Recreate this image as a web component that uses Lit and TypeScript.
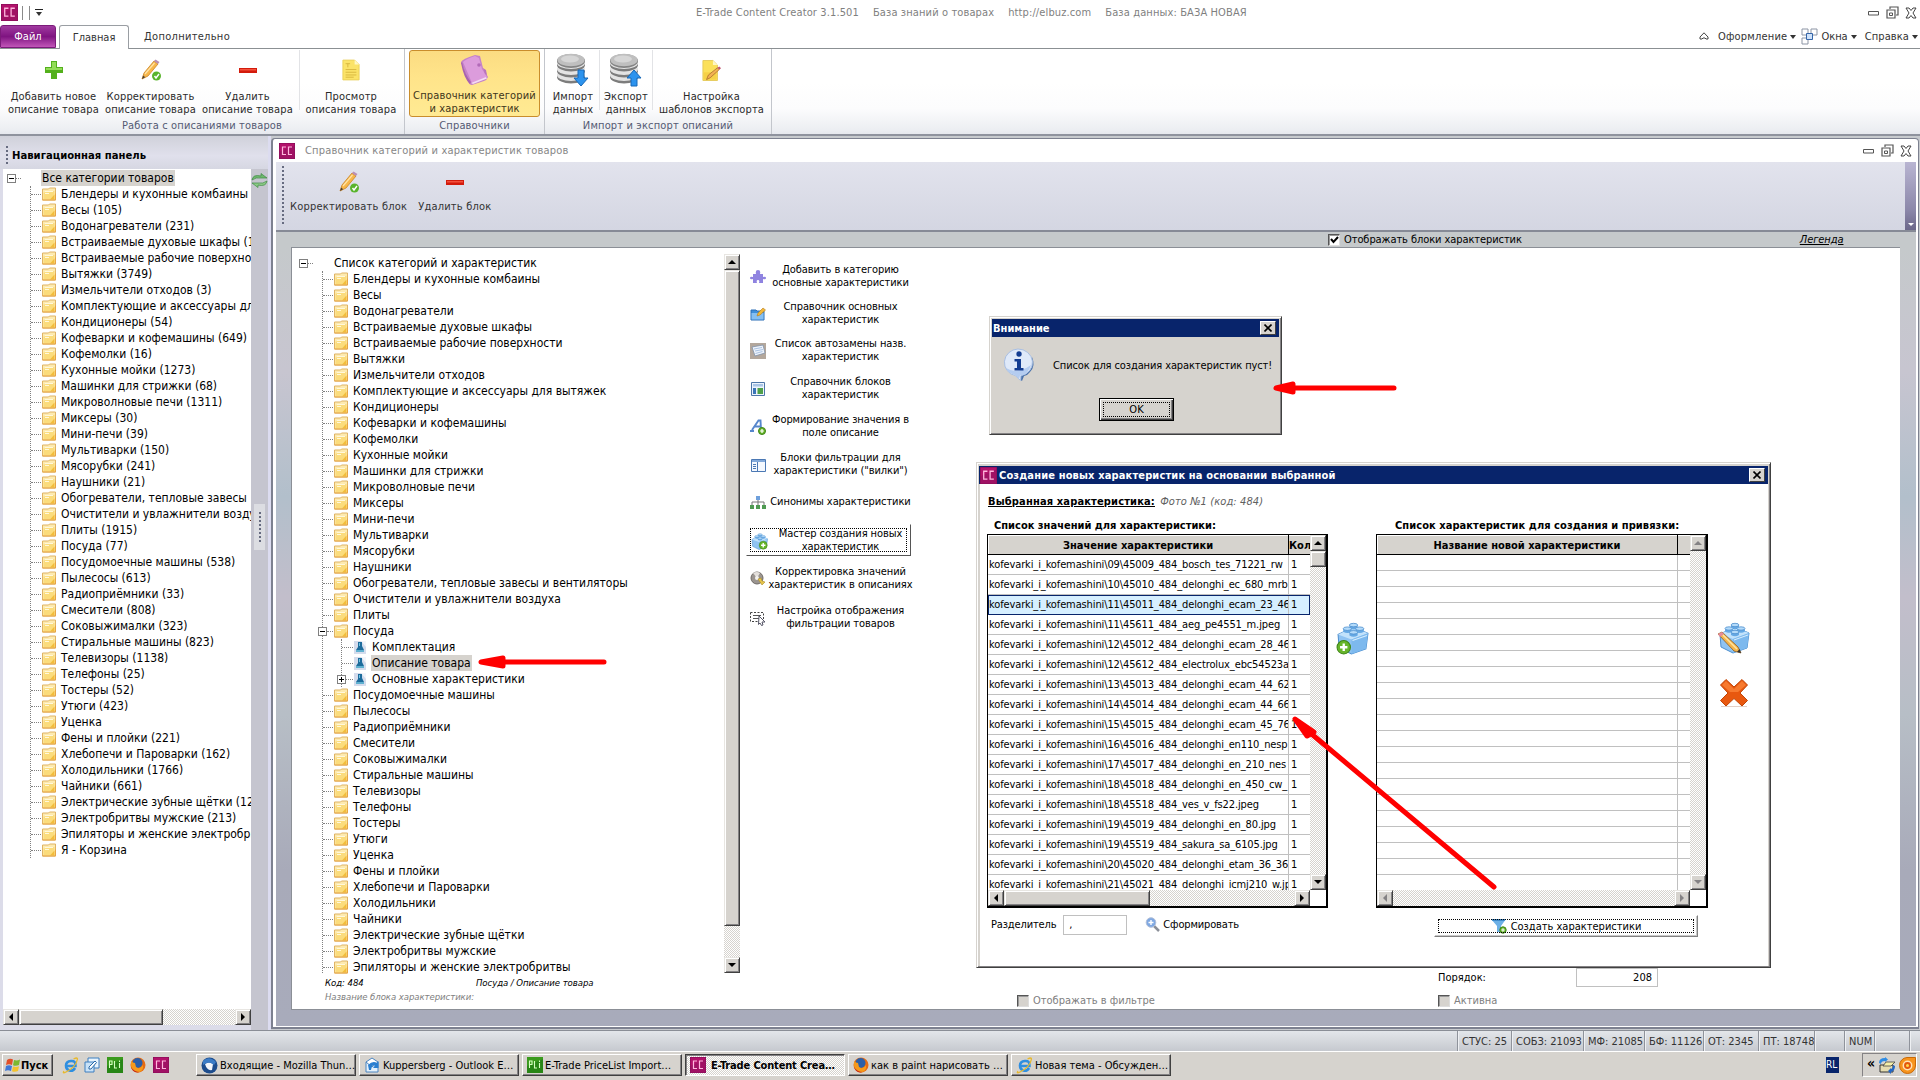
import { LitElement, html, svg, css } from 'lit';
import { customElement, property } from 'lit/decorators.js';
import { classMap } from 'lit/directives/class-map.js';

interface TreeNode {
  label: string;
  open?: boolean;
  children?: TreeLeaf[];
}

interface TreeLeaf {
  label: string;
  selected?: boolean;
  expandable?: boolean;
}

interface Action {
  icon: unknown;
  lines: string[];
  top: number;
  focused?: boolean;
}

const NAV_ITEMS = [
  'Блендеры и кухонные комбаины', 'Весы (105)', 'Водонагреватели (231)',
  'Встраиваемые духовые шкафы (12)', 'Встраиваемые рабочие поверхности', 'Вытяжки (3749)',
  'Измельчители отходов (3)', 'Комплектующие и аксессуары для вытяжек', 'Кондиционеры (54)',
  'Кофеварки и кофемашины (649)', 'Кофемолки (16)', 'Кухонные мойки (1273)',
  'Машинки для стрижки (68)', 'Микроволновые печи (1311)', 'Миксеры (30)', 'Мини-печи (39)',
  'Мультиварки (150)', 'Мясорубки (241)', 'Наушники (21)', 'Обогреватели, тепловые завесы',
  'Очистители и увлажнители воздуха', 'Плиты (1915)', 'Посуда (77)',
  'Посудомоечные машины (538)', 'Пылесосы (613)', 'Радиоприёмники (33)', 'Смесители (808)',
  'Соковыжималки (323)', 'Стиральные машины (823)', 'Телевизоры (1138)', 'Телефоны (25)',
  'Тостеры (52)', 'Утюги (423)', 'Уценка', 'Фены и плойки (221)',
  'Хлебопечи и Пароварки (162)', 'Холодильники (1766)', 'Чайники (661)',
  'Электрические зубные щётки (12)', 'Электробритвы мужские (213)',
  'Эпиляторы и женские электробритвы', 'Я - Корзина',
];

const CATEGORIES: TreeNode[] = [
  'Блендеры и кухонные комбаины', 'Весы', 'Водонагреватели', 'Встраиваемые духовые шкафы',
  'Встраиваемые рабочие поверхности', 'Вытяжки', 'Измельчители отходов',
  'Комплектующие и аксессуары для вытяжек', 'Кондиционеры', 'Кофеварки и кофемашины',
  'Кофемолки', 'Кухонные мойки', 'Машинки для стрижки', 'Микроволновые печи', 'Миксеры',
  'Мини-печи', 'Мультиварки', 'Мясорубки', 'Наушники',
  'Обогреватели, тепловые завесы и вентиляторы', 'Очистители и увлажнители воздуха', 'Плиты',
  'Посуда', 'Посудомоечные машины', 'Пылесосы', 'Радиоприёмники', 'Смесители',
  'Соковыжималки', 'Стиральные машины', 'Телевизоры', 'Телефоны', 'Тостеры', 'Утюги',
  'Уценка', 'Фены и плойки', 'Хлебопечи и Пароварки', 'Холодильники', 'Чайники',
  'Электрические зубные щётки', 'Электробритвы мужские', 'Эпиляторы и женские электробритвы',
].map((label) =>
  label === 'Посуда'
    ? {
        label,
        open: true,
        children: [
          { label: 'Комплектация' },
          { label: 'Описание товара', selected: true },
          { label: 'Основные характеристики', expandable: true },
        ],
      }
    : { label }
);

const VALUES = [
  '09\\45009_484_bosch_tes_71221_rw', '10\\45010_484_delonghi_ec_680_mrb',
  '11\\45011_484_delonghi_ecam_23_46', '11\\45611_484_aeg_pe4551_m.jpeg',
  '12\\45012_484_delonghi_ecam_28_46', '12\\45612_484_electrolux_ebc54523a',
  '13\\45013_484_delonghi_ecam_44_62', '14\\45014_484_delonghi_ecam_44_66',
  '15\\45015_484_delonghi_ecam_45_76', '16\\45016_484_delonghi_en110_nesp',
  '17\\45017_484_delonghi_en_210_nes', '18\\45018_484_delonghi_en_450_cw_',
  '18\\45518_484_ves_v_fs22.jpeg', '19\\45019_484_delonghi_en_80.jpg',
  '19\\45519_484_sakura_sa_6105.jpg', '20\\45020_484_delonghi_etam_36_36',
  '21\\45021_484_delonghi_icmj210_w.jpg',
];

const STATUS: [string, number][] = [
  ['СТУС: 25', 54], ['СОБЗ: 21093', 72], ['МФ: 21085', 61], ['БФ: 11126', 59],
  ['ОТ: 2345', 55], ['ПТ: 18748', 56], ['', 30], ['NUM', 30], ['', 35], ['', 11],
];

/* Icons */
const pic = (w: number, h: number, box: string, body: unknown) =>
  html`<svg width=${w} height=${h} viewBox=${box}>${body}</svg>`;

const folder = pic(14, 14, '0 0 14 14', svg`
  <path d="M.5 2h6l1-1h6v12H.5z" fill="#fdeab0" stroke="#dfb364"/>
  <path d="M1.500 5.500 12.500 4v8.500h-11z" fill="#fbdc7c"/>
  <path d="M3 4.500h8M3 6.500h4" stroke="#fff8dc"/><path d="m8 12.500 4.500-5v5z" fill="#f2bd3c"/>
  <path d="M.5 13h13V6.500" fill="none" stroke="#e7a443"/>`);

const leaf = pic(12, 13, '0 0 12 13', svg`
  <path d="M0 0h12v13H0z" fill="#d5dcec"/><path d="M7 0h5v6z" fill="#f3f5fa"/>
  <path d="M4 1h4v4l2 4H2l2-3z" fill="#1d6c9c"/><path d="M2 9h8v2H2z" fill="#5fb0d0"/>
  <path d="M5 2h1v3H5z" fill="#6fc2e2"/>`);

const ccBadge = (size: number) => pic(size, size, '0 0 16 16', svg`
  <path d="M0 0h16v16H0z" fill="#b3126b"/><path d="M0 0h16v16H0z" fill="none" stroke="#7c0b52"/>
  <path d="M0 16V9l16-7v14z" fill="#8d0f5d" opacity=".5"/>
  <path d="M7 4H3.500v7.500H7M13 4H9.500v7.500H13" fill="none" stroke="#ffb7de" stroke-width="1.200"/>`);

const pliBadge = pic(16, 16, '0 0 16 16', svg`
  <path d="M0 0h16v16H0z" fill="#3a9a1d"/><path d="M0 16V9l16-7v14z" fill="#1d7a12" opacity=".6"/>
  <path d="M2.500 11V4H5v3.500H2.500M7.500 4v7H10M12.500 6v5M12.500 3.500v1.500" fill="none" stroke="#d5ffc0" stroke-width="1.100"/>`);

const plus = pic(20, 20, '0 0 20 20', svg`
  <path d="M7 1h6v6h6v6h-6v6H7v-6H1V7h6z" fill="#53b01c"/><path d="M8 2h4v6h6v2H2V8h6z" fill="#93dc58"/>`);

const minus = pic(20, 20, '0 0 20 20', svg`
  <path d="M1 8h18v5H1z" fill="#d31b0c"/><path d="M2 9h16v1.500H2z" fill="#f4513c"/>`);

const pencilCheck = pic(22, 22, '0 0 22 22', svg`
  <path d="M2 20 4 14 14 2l4 3L8 17z" fill="#f7b64a" stroke="#c98324" stroke-width=".8"/>
  <path d="m14 2 1.500-1.500L19.500 3 18 5z" fill="#b98fb5"/><path d="m2 20 1.200-3.500 2 1.700z" fill="#4a4038"/>
  <path d="m5 15 9.500-11" stroke="#ffe4a8" stroke-width="1.200"/>
  <circle cx="16.500" cy="17" r="4.500" fill="#59b42c"/><path d="m14.500 17 1.500 2 3-4" fill="none" stroke="#fff" stroke-width="1.400"/>`);

const note = pic(18, 22, '0 0 20 24', svg`
  <path d="M1 1h13l5 5v17H1z" fill="#fbe368" stroke="#ead05a"/><path d="M14 1v5h5z" fill="#fff7c4"/>
  <path d="M4 5h5M6.500 5v4M4 11.500h12M4 14.500h12M4 17.500h12M4 20h9" stroke="#d6b43c"/>`);

const noteEdit = pic(20, 23, '0 0 22 24', svg`
  <path d="M1 1h11l5 5v17H1z" fill="#fbe05a" stroke="#e5c95a"/><path d="M12 1v5h5z" fill="#fff7c4"/>
  <path d="M2 14h14v8H2z" fill="#f3c73a" opacity=".6"/>
  <path d="m5 22 2-5 10-8 2 2L9 20z" fill="#f2b052" stroke="#a4682a" stroke-width=".8"/><path d="m17 9 2-1.500 2 2-2 1.500z" fill="#c0546e"/>`);

const book = pic(32, 32, '0 0 32 32', svg`
  <path d="M2 8Q3 5 16 1l5 1 3 12 5 9q-1 3-4 4L13 31q-3 0-4-4z" fill="#c583c8"/>
  <path d="M4 8Q7 5 16 2l4 2 3 11 5 8-15 6z" fill="#dc9cdc"/><path d="m12 29 15-6 1 1.500L14 30z" fill="#f4dcf4"/>
  <path d="M3 8q3 13 9 20l-1 2Q5 25 2 9z" fill="#a863b0"/><circle cx="20" cy="11" r="1.800" fill="#b26ab8"/>
  <path d="m24 14 3 2 1 5-2-1z" fill="#b873bd"/>`);

const database = (up: boolean) => pic(34, 34, '0 0 34 34', svg`
  ${[24, 18, 12].map((y) => svg`<ellipse cx="15" cy=${y} rx="14" ry="6.500" fill="#7c7c7c"/>
    <ellipse cx="15" cy=${y - 2} rx="14" ry="6" fill="#e3e3e3"/>`)}
  <ellipse cx="15" cy="8" rx="14" ry="7" fill="#858585"/><ellipse cx="15" cy="7" rx="13.500" ry="6.200" fill="#bfbfbf"/>
  <ellipse cx="14" cy="6" rx="9" ry="3.500" fill="#d6d6d6"/>
  <path d=${up ? 'M25 17l7 8h-4v8h-6v-8h-4z' : 'M22 17h6v8h4l-7 8-7-8h4z'} fill="#2c93ee" stroke="#1668b8"/>`);

const refresh = pic(17, 15, '0 0 17 15', svg`
  <path d="M1 7Q2 1 10 3V.5L16 5h-6Q5 4 1 7z" fill="#6db86d" stroke="#3d8a43" stroke-width=".7"/>
  <path d="M16 8q-1 6-9 4v2.500L1 10h6q5 1 9-2z" fill="#8ccb86" stroke="#3d8a43" stroke-width=".7"/>`);

const brick = (overlay: unknown, size: number) => pic(size, size, '0 0 32 32', svg`
  <path d="M2 12 17 5l14 6-2 15-14 5L3 25z" fill="#8fc3f2" stroke="#4e8fce"/>
  <path d="m2 12 13 5 16-6L17 5z" fill="#c2e2fb"/><path d="m15 17 16-6-2 15-14 5z" fill="#7db9ee"/>
  <path d="m16 18 14-5" stroke="#d8eefe"/>
  ${[[17, 3], [11, 6.5], [23, 6.5], [17, 10]].map(([x, y]) => svg`
    <path d=${`M${x - 4} ${y}v3q4 2.500 8 0v-3z`} fill="#65a8e4"/><ellipse cx=${x} cy=${y} rx="4" ry="1.700" fill="#b4dbfa" stroke="#4e8fce" stroke-width=".8"/>`)}
  ${overlay}`);

const plusBall = (x: number, y: number, r: number) => svg`
  <circle cx=${x} cy=${y} r=${r} fill="#67b52a" stroke="#3e8417"/>
  <path d=${`M${x - r * 0.55} ${y}h${r * 1.1}M${x} ${y - r * 0.55}v${r * 1.1}`} stroke="#fff" stroke-width=${r * 0.35}/>`;

const brickAdd = brick(plusBall(7.5, 24.5, 6.5), 33);
const brickEdit = brick(svg`<path d="m0 12 4-2 16 15 3 6-7-2z" fill="#f5b64c" stroke="#8a5a20" stroke-width=".8"/>
  <path d="m0 12 4-2 2 2-4 3z" fill="#e58b9a"/><path d="m19 30 4 1-1.500-4z" fill="#333"/><path d="m5 13 14 14" stroke="#ffe3a0" stroke-width="1.500"/>`, 32);
const brickSmall = brick(plusBall(23, 23, 7.5), 17);

const cross = pic(30, 30, '0 0 30 30', svg`
  <path d="M2 28.500h26" stroke="#e2cfc6"/>
  <path d="M7 1.500 15 9l8-7.500 5.500 5.500L21 15l7.500 7.500L23 28l-8-7.500L7 28l-5.500-5.500L9 15 1.500 7z" fill="#e8580f" stroke="#c24405" stroke-linejoin="round"/>
  <path d="m7 3 8 8 8-8 4 4-8 7H11L3 7z" fill="#f77a2f"/>`);

const puzzle = pic(16, 16, '0 0 16 16', svg`
  <path d="M3 5h3Q5 1 8 1t2 4h3v3q3-1 3 1t-3 1v4H9q1-3-1-3t-1 3H3v-4q-3 1-3-1t3-1z" fill="#8f83e0"/>`);
const folderEdit = pic(16, 14, '0 0 16 14', svg`
  <path d="M1 3h5l1 1h7v9H1z" fill="#3f8fdb" stroke="#2c6fb6"/><path d="M1.500 6h12v6.500h-12z" fill="#86bff2"/>
  <path d="m7 9 1-3 5-5 2.500 2-5.500 5z" fill="#f0b73a" stroke="#b77a18" stroke-width=".6"/>`);
const card = pic(16, 16, '0 0 16 16', svg`
  <path d="M0 0h16v16H0z" fill="#b3a79c"/><path d="m2 4 11-2 2 8-10 3z" fill="#eef3fb" stroke="#7f90a8" stroke-width=".8"/>
  <path d="m4 6 8-1.500M5 8l8-1.500M5.500 10.500l7-2" stroke="#a9c2e2"/>`);
const blocks = pic(14, 14, '0 0 14 14', svg`
  <path d="M.5.5h13v13H.5z" fill="#eef4fc" stroke="#4d76a8"/><path d="M2 2h10v2.500H2z" fill="#a9c5e6"/>
  <path d="M2 6h3v6H2z" fill="#3b76b8"/><path d="M6.500 6H12v6H6.500z" fill="#4fa04a"/>`);
const letterAdd = pic(16, 16, '0 0 16 16', svg`
  <path d="M2 11 8.500 1.500h2L11 11M5 7.500h6M0 12h4M9 12h3" fill="none" stroke="#5686cc" stroke-width="1.900"/>${plusBall(12, 12, 3.5)}`);
const columns = pic(15, 13, '0 0 15 13', svg`
  <path d="M.5.5h14v12H.5z" fill="#f4f8fe" stroke="#4b78b4"/><path d="M1 1h13v2H1z" fill="#82a9da"/>
  <path d="M6.500 3v10M2 5.500h3M2 7.500h3M2 9.500h3" stroke="#4b78b4"/>`);
const orgChart = pic(16, 13, '0 0 16 13', svg`
  <path d="M8 3v6M2 9V6h12v3" fill="none" stroke="#777"/><path d="M6 0h4v4H6z" fill="#6fa0dc"/>
  <path d="M0 9h4v4H0zM6 9h4v4H6zM12 9h4v4h-4z" fill="#4f9a52"/>`);
const discEdit = pic(16, 16, '0 0 16 16', svg`
  <circle cx="7" cy="7" r="6" fill="#9b9590" stroke="#6f6a66"/><path d="M7 7 3 2q4-2 7 0z" fill="#e4e0dc"/>
  <circle cx="7" cy="7" r="2" fill="#f4f2f0"/><path d="m8 8 3-1 1 3 3 1-3 3-2-3z" fill="#e8c64a" stroke="#a98c2a" stroke-width=".6"/>`);
const marquee = pic(16, 16, '0 0 16 16', svg`
  <path d="M.5 2.500h13v9H.5z" fill="none" stroke="#444" stroke-dasharray="2 1.500"/><path d="M3 5.500h8M3 8.500h6" stroke="#555"/>
  <path d="m9 6 6 6h-3l1 3-1.500.5L10 13l-1.500 1.500z" fill="#fff" stroke="#556"/>`);
const funnel = pic(16, 16, '0 0 16 16', svg`
  <path d="M0 1h15L10 8v6H6V8z" fill="#6cb0e6"/><path d="M0 1h15l-1.500 2h-12z" fill="#3f8bcb"/>${plusBall(12, 12, 3.2)}`);
const magnifier = pic(15, 15, '0 0 15 15', svg`
  <path d="m9 9 5 5" stroke="#8b8f98" stroke-width="2.500"/><circle cx="6" cy="5.500" r="4.800" fill="#7fa8e2" stroke="#b3c0d8"/>
  <path d="M3.500 5.500h5M6 3v5" stroke="#fff" stroke-width="1.400"/>`);
const info = pic(34, 34, '0 0 34 34', svg`
  <path d="M30 9q4 9-2 15-2 3-6 4l-2 5-6-5z" fill="#4a72ab"/>
  <path d="M16 1a14.500 13.500 0 0 1 3 26.700l-.5 4.800-5-4.800A14 13.500 0 0 1 16 1z" fill="#dfe9f9" stroke="#a9bfe2"/>
  <path d="M4 20q11 7 25-3-3 10-11 10.500L17 31l-4-4Q6 25 4 20z" fill="#b4ccf0"/>
  <circle cx="17" cy="6" r="2.700" fill="#143d92"/><path d="M12.500 11h6.500v9h2.500v2.500h-9V20H15v-6.500h-2.500z" fill="#143d92"/>`);

const tile = pic(12, 16, '0 0 12 14', svg`<path d="M.5 5.500h10v3.500H.5z" fill="#fff" stroke="#555"/>`);
const restore = pic(13, 13, '0 0 13 13', svg`
  <path d="M4 3V1h8v8h-2" fill="none" stroke="#555" stroke-width="1.200"/><path d="M1 4h8v8H1z" fill="#fff" stroke="#555" stroke-width="1.200"/><path d="M3.500 7h3v2.500h-3z" fill="none" stroke="#555"/>`);
const closeMark = pic(12, 12, '0 0 12 12', svg`
  <path d="M1 1h3l2 2.500L8 1h3L8 6l3 5H8L6 8.500 4 11H1l3-5z" fill="#fff" stroke="#444"/>`);
const windows = pic(17, 17, '0 0 17 17', svg`
  <path d="M1 1h6v6H1zM10 1h6v6h-6zM1 10h6v6H1z" fill="#fff" stroke="#8c95a5"/><path d="M5.500 5.500h6v6h-6z" fill="#cfe2fa" stroke="#3465a8"/>`);
const home = pic(10, 9, '0 0 10 9', svg`<path d="M5 .8 9 5v2H7L6 6H4L3 7H1V5z" fill="#fff" stroke="#444"/>`);

const ie = pic(17, 17, '0 0 17 17', svg`
  <path d="M13 11q-2 3.500-5.500 2.500T4 8.500 9 4t4.500 5H5" fill="none" stroke="#2f8fe0" stroke-width="2.600"/>
  <path d="M2 14Q0 17 4 15 14 10 15.500 2q0-2-4 0" fill="none" stroke="#e8b92c" stroke-width="1.300"/>`);
const desktop = pic(16, 16, '0 0 16 16', svg`
  <path d="M4 1h11v10H4z" fill="#e9f4fd" stroke="#3d7fc0"/><path d="M1 5h9v10H1z" fill="#c9e2f7" stroke="#3d7fc0"/><path d="m5 10 6-6 1.500 1.500L7 12H5z" fill="#fff" stroke="#2a6aa8"/>`);
const firefox = pic(16, 16, '0 0 16 16', svg`
  <circle cx="8" cy="8" r="7.500" fill="#e66b12"/><circle cx="7.500" cy="6" r="5" fill="#2b5fa8"/>
  <path d="M1 4q2 2 4 2l1 4q4 3 7-2 1 6-5 7.500Q0 15 1 4z" fill="#f59a1b"/><path d="M1 10q3 5 9 5-7 2-9-5z" fill="#c4271c"/>`);
const thunderbird = pic(17, 17, '0 0 17 17', svg`
  <circle cx="8.500" cy="8.500" r="8" fill="#1d4c8c"/><path d="M4 7q4-3 8 0l-1 6q-5 1-7-6z" fill="#f2f5fa"/><path d="M2 4Q8-2 15 5l-2 3Q8 3 2 8z" fill="#3c7cc6"/>`);
const outlook = pic(17, 17, '0 0 17 17', svg`
  <path d="M2 5h12v10H2z" fill="#e5f1fb" stroke="#4a84c0"/><path d="m2 5 6-4 6 4-6 5z" fill="#fff" stroke="#4a84c0"/>
  <path d="M4 8q5-5 9-2l1.500-2v7H9l2-2.500Q8 7 7 13H5z" fill="#2b7fd0"/>`);
const flag = pic(16, 16, '0 0 16 16', svg`
  <path d="M2 3q3-2 6-.5L7 8Q4 6.500 1 8z" fill="#e2502a"/><path d="M9 3q3 1 6-.5L14 8q-3 1.500-6 .3z" fill="#7cb82f"/>
  <path d="M1 9q3-1.500 6 0l-1 5q-3-1.500-6 0z" fill="#3f78d8"/><path d="M8 9.500q3 1 6-.3L13 14q-3 1.500-6 .3z" fill="#f4c22c"/>`);
const lan = pic(18, 17, '0 0 18 17', svg`
  <path d="M2 8h13v7H2z" fill="#e6ddb0" stroke="#333"/><path d="m5 9 3-4h9l-4 4z" fill="#f6f0a8" stroke="#444" stroke-width=".8"/>
  <path d="M1 6q0-5 6-5V0l3 2.500L7 5V4Q3 4 3 7z" fill="#2f8ce4"/><path d="M17 9q0 5-4 6v2l-3-3 3-3v1q2-1 2-4z" fill="#2467c4"/>`);
const agent = pic(17, 17, '0 0 17 17', svg`
  <path d="M8 .5h8.500V9A8 8 0 1 1 8 .5z" fill="#f7941d" stroke="#c96a08"/><circle cx="8.500" cy="8.500" r="4.200" fill="#e4560c" stroke="#ffe2b5" stroke-width="1.500"/><circle cx="8.500" cy="8.500" r="1.500" fill="#ffd84a"/>`);

const ACTIONS: Action[] = [
  { icon: puzzle, lines: ['Добавить в категорию', 'основные характеристики'], top: 262 },
  { icon: folderEdit, lines: ['Справочник основных', 'характеристик'], top: 299 },
  { icon: card, lines: ['Список автозамены назв.', 'характеристик'], top: 336 },
  { icon: blocks, lines: ['Справочник блоков', 'характеристик'], top: 374 },
  { icon: letterAdd, lines: ['Формирование значения в', 'поле описание'], top: 412 },
  { icon: columns, lines: ['Блоки фильтрации для', 'характеристики ("вилки")'], top: 450 },
  { icon: orgChart, lines: ['Синонимы характеристики'], top: 494 },
  { icon: brickSmall, lines: ['Мастер создания новых', 'характеристик'], top: 526, focused: true },
  { icon: discEdit, lines: ['Корректировка значений', 'характеристик в описаниях'], top: 564 },
  { icon: marquee, lines: ['Настройка отображения', 'фильтрации товаров'], top: 603 },
];

const TASKS = [
  { icon: thunderbird, label: 'Входящие - Mozilla Thun…' },
  { icon: outlook, label: 'Kuppersberg - Outlook E…' },
  { icon: pliBadge, label: 'E-Trade PriceList Import…' },
  { icon: ccBadge(16), label: 'E-Trade Content Crea…', active: true },
  { icon: firefox, label: 'как в paint нарисовать …' },
  { icon: ie, label: 'Новая тема - Обсужден…' },
];

@customElement('classic-scrollbar')
export class ClassicScrollbar extends LitElement {
  @property({ type: Boolean, reflect: true })
  vertical = false;

  @property({ type: Boolean })
  disabled = false;

  @property({ type: Number })
  thumb = 0;

  static styles = css`
    :host {
      display: flex;
      width: 100%;
      height: 16px;
      background: repeating-conic-gradient(#fff 0 25%, #d6d3ce 0 50%) 0 0 / 2px 2px;
    }

    :host([vertical]) {
      flex-direction: column;
      width: 16px;
      height: 100%;
    }

    .cap,
    .thumb {
      flex: none;
      box-sizing: border-box;
      width: 16px;
      height: 16px;
      background: #d6d3ce;
      border: 1px solid;
      border-color: #e8e6e2 #404040 #404040 #e8e6e2;
      box-shadow: inset 1px 1px #fff, inset -1px -1px #848284;
    }

    .cap svg {
      display: block;
      margin: 3px;
    }

    .gap {
      flex: 1;
    }
  `;

  private _cap(d: string) {
    return html`<div class="cap"><svg width="8" height="8" viewBox="0 0 8 8"><path d=${d} fill=${this.disabled ? '#848284' : '#000'} /></svg></div>`;
  }

  render() {
    const size = `${this.vertical ? 'height' : 'width'}: ${this.thumb}px`;
    return html`
      ${this._cap(this.vertical ? 'M4 2l4 4H0z' : 'M2 4l4-4v8z')}
      ${this.thumb ? html`<div class="thumb" style=${size}></div>` : ''}
      <div class="gap"></div>
      ${this._cap(this.vertical ? 'M4 6l4-4H0z' : 'M6 4L2 0v8z')}
    `;
  }
}

@customElement('app-root')
export class AppRoot extends LitElement {
  static styles = css`
    :host {
      display: flex;
      flex-direction: column;
      position: relative;
      width: 1920px;
      height: 1080px;
      overflow: hidden;
      background: #fff;
      color: #000;
      font: 11px/13px 'DejaVu Sans Condensed', 'DejaVu Sans', sans-serif;
      font-stretch: condensed;
      white-space: nowrap;
    }

    * {
      box-sizing: border-box;
    }

    svg {
      display: block;
      flex: none;
    }

    /* Caption and tabs */
    .caption {
      flex: none;
      display: flex;
      align-items: center;
      height: 25px;
      padding: 0 3px 0 1px;
    }

    .caption .tick {
      width: 1px;
      height: 14px;
      margin-left: 4px;
      background: #8a8a8a;
    }

    .caption .tick + .tick {
      margin-left: 6px;
    }

    .quick {
      width: 8px;
      margin-left: 5px;
      border-top: 1px solid #222;
      padding-top: 2px;
    }

    .quick .drop {
      width: 6px;
      margin: 0 1px;
    }

    .app-title {
      display: flex;
      margin-left: 653px;
      color: #7f7f7f;
      letter-spacing: 0.12px;
    }

    .app-title span + span {
      margin-left: 14px;
    }

    .win-buttons {
      display: flex;
      align-items: center;
      gap: 6px;
      margin-left: auto;
    }

    .tabs {
      flex: none;
      display: flex;
      height: 24px;
      border-bottom: 1px solid #8b9093;
      line-height: 24px;
      color: #333;
    }

    .tab-file {
      width: 56px;
      border-radius: 3px 3px 0 0;
      border: 1px solid #7b1b7a;
      background: linear-gradient(#a13aa0, #7f1481 50%, #c155b8);
      color: #fff;
      line-height: 22px;
      text-align: center;
    }

    .tab-main {
      width: 70px;
      height: 24px;
      margin-left: 3px;
      border: 1px solid #9a9ea3;
      border-bottom: 0;
      border-radius: 3px 3px 0 0;
      background: #fff;
      text-align: center;
    }

    .tab-more {
      margin-left: 15px;
      letter-spacing: 0.3px;
    }

    .tools {
      display: flex;
      align-items: center;
      margin-left: auto;
      padding-right: 2px;
    }

    .tools .skin {
      margin-left: 9px;
      letter-spacing: 0.2px;
    }

    .tools .panes {
      margin: 0 3px 0 5px;
    }

    .tools .help {
      margin-left: 8px;
      letter-spacing: 0.1px;
    }

    .drop {
      margin-left: 3px;
      border: 3px solid transparent;
      border-top: 4px solid #333;
      border-bottom: 0;
    }

    /* Ribbon */
    .ribbon {
      flex: none;
      display: flex;
      height: 87px;
      border-bottom: 2px solid #8f939e;
      background: linear-gradient(#fff 40%, #fcfcfd 70%, #eceef2 95%, #e6e8ee);
      color: #2a2a2a;
      letter-spacing: 0.15px;
    }

    .group {
      display: grid;
      grid-template-rows: 69px 1fr;
      padding-top: 1px;
      border-right: 1px solid #c3c6cc;
    }

    .group.items {
      width: 405px;
    }

    .group.refs {
      width: 140px;
    }

    .group.exchange {
      width: 227px;
    }

    .group-buttons {
      display: flex;
      padding-left: 5px;
    }

    .refs .group-buttons {
      padding-left: 4px;
    }

    .exchange .group-buttons {
      padding-left: 2px;
    }

    .group-name {
      text-align: center;
      color: #545a73;
    }

    .rb {
      display: grid;
      grid-template-rows: 40px 26px;
      justify-items: center;
      align-items: center;
      width: 97px;
      height: 67px;
      text-align: center;
    }

    .rb.wide {
      width: 102px;
    }

    .rb.db {
      width: 52px;
    }

    .rb.tpl {
      width: 117px;
    }

    .rb.hot {
      grid-template-rows: 38px 26px;
      width: 131px;
      border: 1px solid #c98d2c;
      border-radius: 3px;
      background: linear-gradient(#fbdc82, #ffe48a 40%, #ffea93);
      color: #40351a;
    }

    .split {
      width: 1px;
      height: 60px;
      background: #e2e3e6;
    }

    .items .split {
      margin-left: 3px;
    }

    /* Work area */
    .work {
      flex: none;
      display: flex;
      height: 894px;
      background: #c7cace;
    }

    .nav {
      display: grid;
      grid-template: 33px 840px 1fr / 3px 248px 1fr;
      width: 271px;
      border-right: 3px solid #dcdcf0;
      background: linear-gradient(#d4d4de, #dcdce9 33px);
    }

    .nav-head {
      grid-column: 1 / -1;
      display: flex;
      align-items: center;
      gap: 4px;
      padding: 5px 0 0 6px;
      background: linear-gradient(#d0d1da, #e0e0ec 60%, #d6d7e2);
      font-size: 11.2px;
      font-weight: bold;
    }

    .grip {
      width: 2px;
      height: 19px;
      background: repeating-linear-gradient(#666b80 0 2px, transparent 2px 4px);
    }

    .nav-tree {
      grid-column: 2;
      overflow: hidden;
      background: #fff;
    }

    .nav-side {
      grid-row: 2 / 4;
      grid-column: 3;
      display: flex;
      flex-direction: column;
      align-items: flex-start;
      padding-top: 4px;
      background: #c5c5cf;
    }

    .nav-side .handle {
      display: grid;
      place-items: center;
      width: 11px;
      height: 46px;
      margin: 316px 0 0 3px;
      background: #dcdde2;
    }

    .handle .grip {
      height: 30px;
    }

    .nav-scroll {
      grid-column: 2;
      height: 17px;
    }

    /* Trees */
    .tree {
      font-size: 12px;
      line-height: 16px;
    }

    .root {
      display: flex;
      align-items: center;
      height: 16px;
    }

    .root .stub {
      width: 5px;
      border-top: 1px dotted #808080;
    }

    .box {
      flex: none;
      width: 9px;
      height: 9px;
      border: 1px solid #808080;
      background:
        linear-gradient(#000, #000) center / 5px 1px no-repeat,
        #fff;
    }

    .box.closed {
      background:
        linear-gradient(#000, #000) center / 5px 1px no-repeat,
        linear-gradient(#000, #000) center / 1px 5px no-repeat,
        #fff;
    }

    .sel {
      background: #d6d3ce;
      box-shadow: -1px 0 #d6d3ce, 1px 0 #d6d3ce;
    }

    .branch {
      border-left: 1px dotted #808080;
    }

    .row {
      display: flex;
      align-items: center;
      height: 16px;
    }

    .row::before {
      content: '';
      flex: none;
      width: 10px;
      margin-right: 1px;
      border-top: 1px dotted #808080;
    }

    .row svg + span {
      margin-left: 5px;
    }

    .row.boxed::before {
      content: none;
    }

    .row.boxed .box {
      margin-left: -5px;
    }

    .row.boxed .stub {
      flex: none;
      width: 6px;
      margin-right: 1px;
      border-top: 1px dotted #808080;
    }

    .sub {
      margin-left: 18px;
      border-left: 1px dotted #808080;
    }

    .sub .row::before {
      width: 11px;
    }

    .sub .row.boxed .stub {
      width: 7px;
    }

    .sub .row svg + span {
      margin-left: 6px;
    }

    .nav-tree .root {
      padding-left: 4px;
      margin-top: 1px;
    }

    .nav-tree .root span:last-child {
      margin-left: 21px;
    }

    .nav-tree .branch {
      margin-left: 27px;
    }

    /* Child window */
    .child {
      flex: 1;
      display: grid;
      grid-template-rows: 23px 70px 15px 1fr;
      margin: 2px 1px 1px 0;
      border: 1px solid #7d8190;
      border-width: 1px 1px 2px 2px;
      background: #fff;
      border-radius: 4px 4px 0 0;
    }

    .child-title {
      display: flex;
      align-items: center;
      padding: 0 6px;
      color: #868686;
      letter-spacing: 0.17px;
    }

    .child-title span {
      margin-left: 10px;
    }

    .toolbar {
      display: flex;
      margin: 0 2px 0 3px;
      border-bottom: 2px solid #868a96;
      background: linear-gradient(#e2e3ed, #d4d6e2);
      color: #333;
      letter-spacing: 0.2px;
    }

    .toolbar > .grip {
      height: 60px;
      margin: 4px 6px 0 6px;
    }

    .tb {
      display: grid;
      grid-template-rows: 22px 26px;
      justify-items: center;
      align-items: center;
      margin: 9px 11px 0 0;
      height: 48px;
    }

    .overflow {
      display: flex;
      align-items: flex-end;
      justify-content: center;
      width: 11px;
      margin-left: auto;
      padding-bottom: 4px;
      background: linear-gradient(#b9b5d2, #8c88aa 70%, #6c688a);
    }

    .overflow i {
      border: 3px solid transparent;
      border-top-color: #fff;
      border-bottom: 0;
    }

    .strip {
      display: flex;
      align-items: center;
      margin: 0 2px 0 3px;
      padding-left: 1052px;
      background: #c5c9cb;
      letter-spacing: -0.08px;
    }

    .legend {
      margin-left: 278px;
      font-style: italic;
      text-decoration: underline;
    }

    .check {
      width: 12px;
      height: 12px;
      margin-right: 4px;
      border: 1px solid;
      border-color: #555 #ddd #ddd #555;
      box-shadow: inset 1px 1px #999;
      background: #fff;
    }

    .check.off {
      background: #d6d3ce;
    }

    .content {
      display: flex;
      margin: 0 2px 1px 3px;
      padding: 0 16px 16px 15px;
      background: linear-gradient(#c5c9cb, #c7c5d0 16%, #b2bfcb 32%, #c2becb 45%, #b7bec6 60%, #a8aab9 80%, #a8abbb);
    }

    .sheet {
      flex: 1;
      display: flex;
      border: 1px solid #8b8f96;
      border-width: 1px 0 1px 1px;
      background: #fff;
    }

    .tree-col {
      display: grid;
      grid-template: 726px 1fr / 432px 16px;
      width: 448px;
    }

    .cat-tree {
      overflow: hidden;
      padding: 7px 0 0 7px;
    }

    .cat-tree .root span:last-child {
      margin-left: 21px;
    }

    .cat-tree .branch {
      margin-left: 23px;
    }

    .tree-col classic-scrollbar {
      height: 719px;
      margin-top: 6px;
    }

    .foot {
      grid-column: 1 / -1;
      display: grid;
      grid-template-columns: 151px 1fr;
      align-content: start;
      padding: 2px 0 0 33px;
      font: italic 9.5px/14px 'DejaVu Sans Condensed', sans-serif;
      letter-spacing: -0.06px;
    }

    .foot .muted {
      color: #808080;
    }

    .actions {
      width: 166px;
      margin-left: 6px;
    }

    .action {
      display: grid;
      grid-template-columns: 24px 1fr;
      align-items: center;
      justify-items: center;
      width: 165px;
      letter-spacing: -0.07px;
      text-align: center;
    }

    .action > svg {
      margin: -1px 0 -3px;
    }

    .action > div {
      display: grid;
      justify-content: center;
      width: 131px;
    }

    .action.focused {
      height: 32px;
      margin-top: -3px;
      margin-bottom: -3px;
      border: 1px solid;
      border-color: #fff #555 #555 #fff;
      outline: 1px dotted #000;
      outline-offset: -5px;
    }

    .form {
      flex: 1;
      display: grid;
      grid-template-columns: 421px 138px 1fr;
      grid-template-rows: 30px 17px;
      align-content: end;
      align-items: center;
      padding-left: 105px;
    }

    .field {
      display: flex;
      align-items: center;
      height: 20px;
      padding: 0 5px;
      border: 1px solid #c0c0c0;
      background: #fff;
    }

    .order {
      width: 82px;
      height: 19px;
      justify-content: flex-end;
    }

    .opt {
      display: flex;
      align-items: center;
      color: #808080;
    }

    .opt.order-opt {
      grid-column: 2;
    }

    /* Status bar */
    .status {
      flex: none;
      display: flex;
      justify-content: flex-end;
      height: 21px;
      border-top: 1px solid #8a8e96;
      background: linear-gradient(#e3e6ea, #c6c9cf);
      color: #333;
      line-height: 21px;
    }

    .status div {
      padding-left: 4px;
      border-left: 1px solid #8f939b;
      box-shadow: inset 1px 0 #eef0f3;
    }

    /* Taskbar */
    .taskbar {
      flex: 1;
      display: flex;
      align-items: flex-start;
      padding: 2px 3px 0 2px;
      border-top: 1px solid #fff;
      background: #d6d3ce;
    }

    .start,
    .task {
      display: flex;
      align-items: center;
      height: 22px;
      border: 1px solid;
      border-color: #fff #404040 #404040 #fff;
      box-shadow: inset -1px -1px #848284;
    }

    .start {
      width: 51px;
      padding-left: 2px;
      font-weight: bold;
    }

    .quick-launch {
      display: flex;
      gap: 7px;
      align-items: center;
      width: 143px;
      height: 22px;
      padding-left: 9px;
    }

    .quick-launch svg:first-child {
      margin-right: -2px;
    }

    .task {
      gap: 2px;
      width: 160px;
      margin-right: 3px;
      padding-left: 4px;
      overflow: hidden;
    }

    .task.active {
      gap: 5px;
      border-color: #404040 #fff #fff #404040;
      box-shadow: inset 1px 1px #848284;
      background: repeating-conic-gradient(#fff 0 25%, #d6d3ce 0 50%) 0 0 / 2px 2px;
      font-weight: bold;
      letter-spacing: -0.15px;
    }

    .lang {
      width: 13px;
      height: 16px;
      margin: 3px 23px 0 auto;
      background: #08246b;
      color: #fff;
      font-size: 10px;
      line-height: 16px;
    }

    .tray {
      display: flex;
      align-items: center;
      gap: 3px;
      width: 55px;
      height: 24px;
      margin-top: -1px;
      padding-left: 4px;
      border: 1px solid;
      border-color: #848284 #fff #fff #848284;
    }

    .tray b {
      width: 10px;
      font-size: 14px;
      margin-top: -3px;
    }

    /* Floating dialogs */
    .dialog {
      position: absolute;
      border: 1px solid;
      border-color: #d6d3ce #404040 #404040 #d6d3ce;
      box-shadow: inset 1px 1px #fff, inset -1px -1px #848284;
      background: #d6d3ce;
      padding: 3px 2px;
    }

    .dialog-title {
      display: flex;
      align-items: center;
      height: 18px;
      padding: 0 3px 0 1px;
      background: #08246b;
      color: #fff;
      font-weight: bold;
    }

    .x {
      display: grid;
      place-items: center;
      width: 16px;
      height: 14px;
      margin-left: auto;
      background: #d6d3ce;
      border: 1px solid;
      border-color: #fff #404040 #404040 #fff;
    }

    .alert {
      left: 989px;
      top: 316px;
      width: 293px;
      height: 119px;
      padding-top: 2px;
    }

    .alert-body {
      display: grid;
      grid-template-columns: 45px 1fr;
      align-items: center;
      padding: 11px 0 0 10px;
    }

    .alert-body span {
      padding-left: 6px;
      letter-spacing: -0.11px;
    }

    .ok {
      display: grid;
      place-items: center;
      width: 75px;
      height: 23px;
      margin: 16px 0 0 107px;
      border: 1px solid #000;
      box-shadow: inset 1px 1px #fff, inset -1px -1px #404040, inset -2px -2px #848284;
      outline: 1px dotted #000;
      outline-offset: -5px;
    }

    .wizard {
      left: 976px;
      top: 462px;
      width: 795px;
      height: 506px;
    }

    .wizard .dialog-title span {
      margin-left: 2px;
      letter-spacing: 0.14px;
    }

    .wizard-body {
      display: grid;
      grid-template-columns: 341px 48px 332px 1fr;
      grid-template-rows: 31px 19px 374px 1fr;
      height: 482px;
      margin-left: 1px;
      padding-left: 7px;
      background: #fff;
    }

    .chosen {
      grid-column: 1 / -1;
      padding: 11px 0 0 1px;
    }

    .chosen b {
      letter-spacing: 0.15px;
      text-decoration: underline;
    }

    .chosen i {
      margin-left: 2px;
      color: #606060;
      letter-spacing: 0.1px;
    }

    .list-name {
      padding: 4px 0 0 7px;
      font-weight: bold;
    }

    .list-name.second {
      grid-column: 3;
      padding-left: 19px;
      letter-spacing: 0.06px;
    }

    .grid {
      display: grid;
      grid-template: 355px 16px / 322px 16px 1fr;
      height: 374px;
      border: 1px solid #000;
      border-width: 1px 2px 2px 1px;
    }

    .grid.target {
      grid-template-columns: 313px 16px 1fr;
    }

    .cells {
      overflow: hidden;
    }

    .head,
    .line {
      display: grid;
      grid-template-columns: 301px 1fr;
    }

    .head {
      height: 20px;
      border-bottom: 1px solid #000;
      background: #d6d3ce;
      font-weight: bold;
      line-height: 21px;
      text-align: center;
      box-shadow: inset 1px 1px #fff;
    }

    .head > :first-child {
      border-right: 1px solid #000;
    }

    .line {
      height: 20px;
      border-bottom: 1px solid #c0c0c0;
      letter-spacing: -0.12px;
      line-height: 20px;
    }

    .line > * {
      overflow: hidden;
      padding-left: 1px;
    }

    .line > :first-child {
      border-right: 1px solid #c0c0c0;
    }

    .line > :last-child {
      padding-left: 2px;
    }

    .line.picked {
      background: #d6efff;
      outline: 1px solid #08246b;
      outline-offset: -1px;
    }

    .target .line {
      height: 16px;
    }

    .side {
      display: flex;
      flex-direction: column;
      align-items: center;
      gap: 24px;
      padding-top: 88px;
    }

    .side.right {
      padding-right: 9px;
    }

    .below {
      display: flex;
      align-items: center;
      height: 21px;
      margin-top: 6px;
      padding-left: 4px;
      letter-spacing: -0.15px;
    }

    .below .field {
      width: 64px;
      margin: 0 18px 0 7px;
    }

    .below svg {
      margin-right: 3px;
    }

    .create {
      grid-column: 3;
      display: flex;
      align-items: center;
      justify-content: center;
      gap: 4px;
      width: 264px;
      height: 22px;
      margin: 7px 0 0 58px;
      border: 1px solid;
      border-color: #fff #808080 #808080 #fff;
      box-shadow: inset -1px -1px #c8c8c8;
      outline: 1px dotted #000;
      outline-offset: -5px;
    }

    .arrows {
      position: absolute;
      inset: 0;
    }
  `;

  private _ribbonButton(icon: unknown, lines: string[], kind = '') {
    return html`<div class="rb ${kind}">${icon}<div>${lines[0]}<br />${lines[1]}</div></div>`;
  }

  private _ribbon() {
    return html`
      <div class="ribbon">
        <div class="group items">
          <div class="group-buttons">
            ${this._ribbonButton(plus, ['Добавить новое', 'описание товара'])}
            ${this._ribbonButton(pencilCheck, ['Корректировать', 'описание товара'])}
            ${this._ribbonButton(minus, ['Удалить', 'описание товара'])}
            <div class="split"></div>
            ${this._ribbonButton(note, ['Просмотр', 'описания товара'], 'wide')}
          </div>
          <div class="group-name">Работа с описаниями товаров</div>
        </div>
        <div class="group refs">
          <div class="group-buttons">
            ${this._ribbonButton(book, ['Справочник категорий', 'и характеристик'], 'hot')}
          </div>
          <div class="group-name">Справочники</div>
        </div>
        <div class="group exchange">
          <div class="group-buttons">
            ${this._ribbonButton(database(false), ['Импорт', 'данных'], 'db')}
            <div class="split"></div>
            ${this._ribbonButton(database(true), ['Экспорт', 'данных'], 'db')}
            <div class="split"></div>
            ${this._ribbonButton(noteEdit, ['Настройка', 'шаблонов экспорта'], 'tpl')}
          </div>
          <div class="group-name">Импорт и экспорт описаний</div>
        </div>
      </div>
    `;
  }

  private _nav() {
    return html`
      <div class="nav">
        <div class="nav-head"><div class="grip"></div>Навигационная панель</div>
        <div class="nav-tree tree">
          <div class="root"><span class="box"></span><span class="stub"></span><span class="sel">Все категории товаров</span></div>
          <div class="branch">
            ${NAV_ITEMS.map((item) => html`<div class="row">${folder}<span>${item}</span></div>`)}
          </div>
        </div>
        <div class="nav-side">${refresh}<div class="handle"><div class="grip"></div></div></div>
        <div class="nav-scroll"><classic-scrollbar .thumb=${144}></classic-scrollbar></div>
      </div>
    `;
  }

  private _category(node: TreeNode) {
    if (!node.children) {
      return html`<div class="row">${folder}<span>${node.label}</span></div>`;
    }
    return html`
      <div class="row boxed"><i class="box"></i><i class="stub"></i>${folder}<span>${node.label}</span></div>
      <div class="sub">
        ${node.children.map((child) => html`
          <div class=${classMap({ row: true, boxed: !!child.expandable })}>
            ${child.expandable ? html`<i class="box closed"></i><i class="stub"></i>` : ''}
            ${leaf}<span class=${classMap({ sel: !!child.selected })}>${child.label}</span>
          </div>
        `)}
      </div>
    `;
  }

  private _action(action: Action, index: number) {
    // vertical rhythm of the column is uneven, the gap comes from the top offsets
    const prev = ACTIONS[index - 1];
    const gap = prev ? action.top - prev.top - prev.lines.length * 13 : action.top - 247;
    return html`
      <div style="padding-top: ${gap}px">
        <div class=${classMap({ action: true, focused: !!action.focused })}>
          ${action.icon}
          <div>${action.lines.map((line) => html`<span>${line}</span>`)}</div>
        </div>
      </div>
    `;
  }

  private _child() {
    return html`
      <div class="child">
        <div class="child-title">
          ${ccBadge(16)}<span>Справочник категорий и характеристик товаров</span>
          <div class="win-buttons">${tile}${restore}${closeMark}</div>
        </div>
        <div class="toolbar">
          <div class="grip"></div>
          <div class="tb">${pencilCheck}<span>Корректировать блок</span></div>
          <div class="tb">${minus}<span>Удалить блок</span></div>
          <div class="overflow"><i></i></div>
        </div>
        <div class="strip">
          <div class="check"><svg width="10" height="10" viewBox="0 0 10 10"><path d="m2 4 2.500 3L9 2" fill="none" stroke="#000" stroke-width="2" /></svg></div>
          Отображать блоки характеристик
          <span class="legend">Легенда</span>
        </div>
        <div class="content">
          <div class="sheet">
            <div class="tree-col">
              <div class="cat-tree tree">
                <div class="root"><span class="box"></span><span class="stub"></span><span>Список категорий и характеристик</span></div>
                <div class="branch">${CATEGORIES.map((node) => this._category(node))}</div>
              </div>
              <classic-scrollbar vertical .thumb=${656}></classic-scrollbar>
              <div class="foot">
                <span>Код: 484</span><span>Посуда / Описание товара</span>
                <span class="muted">Название блока характеристики:</span>
              </div>
            </div>
            <div class="actions">${ACTIONS.map((action, i) => this._action(action, i))}</div>
            <div class="form">
              <span></span><span>Порядок:</span><div class="field order">208</div>
              <div class="opt"><div class="check off"></div>Отображать в фильтре</div>
              <div class="opt order-opt"><div class="check off"></div>Активна</div>
            </div>
          </div>
        </div>
      </div>
    `;
  }

  private _closeButton() {
    return html`<div class="x"><svg width="8" height="8" viewBox="0 0 8 8"><path d="m.5.5 7 7m0-7-7 7" stroke="#000" stroke-width="1.600" /></svg></div>`;
  }

  private _wizard() {
    return html`
      <div class="dialog wizard">
        <div class="dialog-title">${ccBadge(17)}<span>Создание новых характеристик на основании выбранной</span>${this._closeButton()}</div>
        <div class="wizard-body">
          <div class="chosen"><b>Выбранная характеристика:</b> <i>Фото №1 (код: 484)</i></div>
          <div class="list-name">Список значений для характеристики:</div>
          <div class="list-name second">Список характеристик для создания и привязки:</div>
          <div></div>
          <div class="grid">
            <div class="cells">
              <div class="head"><span>Значение характеристики</span><span>Кол</span></div>
              ${VALUES.map((value, i) => html`
                <div class=${classMap({ line: true, picked: i === 2 })}>
                  <span>kofevarki_i_kofemashini\\${value}</span><span>1</span>
                </div>
              `)}
            </div>
            <classic-scrollbar vertical .thumb=${16}></classic-scrollbar>
            <i></i>
            <classic-scrollbar .thumb=${146}></classic-scrollbar>
          </div>
          <div class="side">${brickAdd}</div>
          <div class="grid target">
            <div class="cells">
              <div class="head"><span>Название новой характеристики</span><span></span></div>
              ${Array.from({ length: 21 }, () => html`<div class="line"><span></span><span></span></div>`)}
            </div>
            <classic-scrollbar vertical disabled></classic-scrollbar>
            <i></i>
            <classic-scrollbar disabled></classic-scrollbar>
          </div>
          <div class="side right">${brickEdit}${cross}</div>
          <div class="below">Разделитель<div class="field">,</div>${magnifier}Сформировать</div>
          <div class="create">${funnel}Создать характеристики</div>
        </div>
      </div>
    `;
  }

  render() {
    return html`
      <div class="caption">
        ${ccBadge(17)}<i class="tick"></i><i class="tick"></i>
        <div class="quick"><div class="drop"></div></div>
        <div class="app-title">
          <span>E-Trade Content Creator 3.1.501</span><span>База знаний о товарах</span>
          <span>http://elbuz.com</span><span>База данных: БАЗА НОВАЯ</span>
        </div>
        <div class="win-buttons">${tile}${restore}${closeMark}</div>
      </div>
      <div class="tabs">
        <div class="tab-file">Файл</div>
        <div class="tab-main">Главная</div>
        <div class="tab-more">Дополнительно</div>
        <div class="tools">
          ${home}
          <span class="skin">Оформление</span><i class="drop"></i>
          <span class="panes">${windows}</span>Окна<i class="drop"></i>
          <span class="help">Справка</span><i class="drop"></i>
        </div>
      </div>
      ${this._ribbon()}
      <div class="work">${this._nav()}${this._child()}</div>
      <div class="status">
        ${STATUS.map(([text, width]) => html`<div style="width: ${width}px">${text}</div>`)}
      </div>
      <div class="taskbar">
        <div class="start">${flag}Пуск</div>
        <div class="quick-launch">${ie}${desktop}${pliBadge}${firefox}${ccBadge(16)}</div>
        ${TASKS.map((task) => html`<div class=${classMap({ task: true, active: !!task.active })}>${task.icon}${task.label}</div>`)}
        <div class="lang">RL</div>
        <div class="tray"><b>«</b>${lan}${agent}</div>
      </div>
      <div class="dialog alert">
        <div class="dialog-title">Внимание${this._closeButton()}</div>
        <div class="alert-body">${info}<span>Список для создания характеристик пуст!</span></div>
        <div class="ok">OK</div>
      </div>
      ${this._wizard()}
      <svg class="arrows" width="1920" height="1080" viewBox="0 0 1920 1080" fill="#f00" stroke="#f00" stroke-width="5" stroke-linecap="round" stroke-linejoin="round">
        <path d="M500 662h104M481 662l22-4v8z" />
        <path d="M1292 388h102M1276 388l17-4v8z" />
        <path d="m1308 731 186 156M1295 719l19 13-7 4z" />
      </svg>
    `;
  }
}
